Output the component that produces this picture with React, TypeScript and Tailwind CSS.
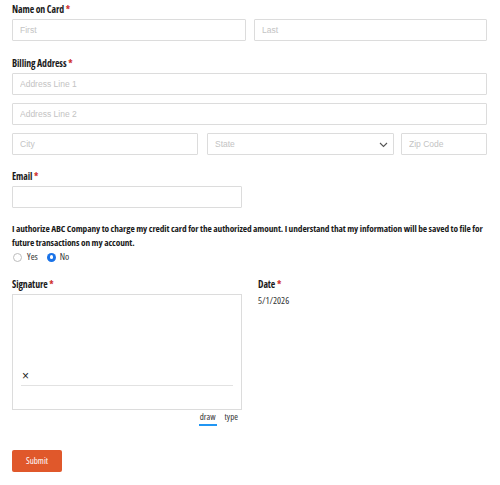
import React from "react";

const cond = { fontFamily: '"Open Sans", "Liberation Sans", sans-serif' };
const arial = { fontFamily: '"Liberation Sans", Arial, sans-serif' };

function Label({ text }: { text: string }) {
  return (
    <div className="text-[9.8px] leading-[13px] font-bold font-stretch-condensed text-[#1b1b1b] mb-[3px] tracking-[-0.1px]" style={cond}>
      {text} <span className="text-[#d0302f]">*</span>
    </div>
  );
}

function Field({ ph, className = "" }: { ph?: string; className?: string }) {
  return (
    <input
      placeholder={ph}
      className={
        "block h-[22px] border border-[#dcdcdc] rounded-[1px] px-[7px] text-[8.5px] text-[#333] placeholder:text-[#c3c3c3] outline-none bg-white " +
        className
      }
      style={arial}
    />
  );
}

export default function App() {
  return (
    <div className="w-[500px] pl-3 pr-[13px] pt-[3px] pb-4 bg-white" style={cond}>
      <Label text="Name on Card" />
      <div className="flex gap-[8px]">
        <Field ph="First" className="w-[234px]" />
        <Field ph="Last" className="flex-1 min-w-0" />
      </div>

      <div className="mt-[16px]">
        <Label text="Billing Address" />
        <div className="flex flex-col gap-[8px]">
          <Field ph="Address Line 1" className="w-full" />
          <Field ph="Address Line 2" className="w-full" />
          <div className="flex">
            <Field ph="City" className="w-[186px]" />
            <div className="relative ml-[9px] w-[187px]">
              <Field ph="State" className="w-full" />
              <svg className="absolute right-[6px] top-[9px]" width="9" height="6" viewBox="0 0 9 6" fill="none">
                <path d="M1 1l3.5 3.5L8 1" stroke="#555" strokeWidth="1.1" />
              </svg>
            </div>
            <Field ph="Zip Code" className="ml-[7px] flex-1 min-w-0" />
          </div>
        </div>
      </div>

      <div className="mt-[15px]">
        <Label text="Email" />
        <Field className="w-[230px]" />
      </div>

      <div className="mt-[14px] text-[9.4px] leading-[13.5px] font-bold font-stretch-condensed text-[#1b1b1b] tracking-[-0.1px]">
        I authorize ABC Company to charge my credit card for the authorized amount. I understand that my information will be saved to file for future transactions on my account.
      </div>
      <div className="flex items-center mt-[1px] h-[14px] text-[9.5px] text-[#333] font-stretch-condensed">
        <span className="w-[9px] h-[9px] rounded-full border border-[#bdbdbd] ml-[1px]" />
        <span className="ml-[5px]">Yes</span>
        <span className="w-[9px] h-[9px] rounded-full bg-[#1a73e8] ml-[9px] flex items-center justify-center">
          <span className="w-[3.5px] h-[3.5px] rounded-full bg-white" />
        </span>
        <span className="ml-[4px]">No</span>
      </div>

      <div className="flex mt-[14px]">
        <div className="w-[230px]">
          <Label text="Signature" />
          <div className="h-[116px] border border-[#dcdcdc] flex flex-col justify-end px-[8px] pb-[23px]">
            <div className="text-[12px] leading-[10px] text-[#222] ml-[1px] mb-[4px]" style={arial}>×</div>
            <div className="border-t border-[#e2e2e2]" />
          </div>
          <div className="flex justify-end gap-[8px] text-[9px] text-[#333] pr-[4px] mt-[1px] font-stretch-condensed">
            <span className="border-b-2 border-[#2196f3] px-[1px] pb-[1px] leading-[12px]">draw</span>
            <span className="leading-[12px]">type</span>
          </div>
        </div>
        <div className="ml-[16px]">
          <Label text="Date" />
          <div className="text-[9.5px] text-[#333] leading-[13px] font-stretch-condensed">5/1/2026</div>
        </div>
      </div>

      <button className="mt-[24px] block w-[50px] h-[22px] bg-[#e0582b] rounded-[2px] text-white text-[9px] font-stretch-condensed">
        Submit
      </button>
    </div>
  );
}
